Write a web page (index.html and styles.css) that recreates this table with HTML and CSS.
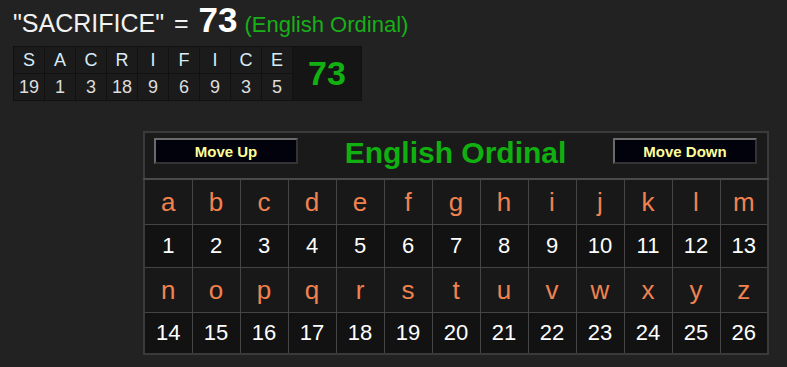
FILE: index.html
```html
<!DOCTYPE html>
<html lang="en">
<head>
    <meta charset="UTF-8">
    <title>Gematria - English Ordinal</title>
    <link rel="stylesheet" href="styles.css">
</head>
<body>

    <div class="result-title">
        "SACRIFICE" <span class="eq">=</span> <b class="total">73</b> <span class="cipher-name">(English Ordinal)</span>
    </div>

    <!-- letter breakdown -->
    <table class="breakdown">
        <tr class="bd-letters">
            <td>S</td><td>A</td><td>C</td><td>R</td><td>I</td><td>F</td><td>I</td><td>C</td><td>E</td>
            <td class="bd-sum" rowspan="2">73</td>
        </tr>
        <tr class="bd-values">
            <td>19</td><td>1</td><td>3</td><td>18</td><td>9</td><td>6</td><td>9</td><td>3</td><td>5</td>
        </tr>
    </table>

    <!-- cipher chart -->
    <table class="cipher-chart">
        <tr>
            <td class="chart-head" colspan="13">
                <div class="head-bar">
                    <button class="move-btn">Move Up</button>
                    <span class="chart-title">English Ordinal</span>
                    <button class="move-btn">Move Down</button>
                </div>
            </td>
        </tr>
        <tr class="chart-letters">
            <td>a</td><td>b</td><td>c</td><td>d</td><td>e</td><td>f</td><td>g</td><td>h</td><td>i</td><td>j</td><td>k</td><td>l</td><td>m</td>
        </tr>
        <tr class="chart-values">
            <td>1</td><td>2</td><td>3</td><td>4</td><td>5</td><td>6</td><td>7</td><td>8</td><td>9</td><td>10</td><td>11</td><td>12</td><td>13</td>
        </tr>
        <tr class="chart-letters">
            <td>n</td><td>o</td><td>p</td><td>q</td><td>r</td><td>s</td><td>t</td><td>u</td><td>v</td><td>w</td><td>x</td><td>y</td><td>z</td>
        </tr>
        <tr class="chart-values last">
            <td>14</td><td>15</td><td>16</td><td>17</td><td>18</td><td>19</td><td>20</td><td>21</td><td>22</td><td>23</td><td>24</td><td>25</td><td>26</td>
        </tr>
    </table>

</body>
</html>
```

FILE: styles.css
```css
/* base */
body {
    margin: 0;
    padding: 0 13px;
    background: #222222;
    color: #ffffff;
    font-family: "Liberation Sans", Arial, sans-serif;
}

/* heading line */
.result-title {
    font-size: 25px;
    line-height: 30px;
    padding-top: 5px;
    color: #f2f2f2;
    white-space: nowrap;
}

.result-title .eq {
    margin-left: 3px;
}

.result-title .total {
    margin-left: 3px;
    font-size: 35px;
    color: #ffffff;
}

.result-title .cipher-name {
    font-size: 22px;
    color: #18b018;
}

/* breakdown table */
.breakdown {
    margin-top: 6px;
    border-spacing: 1px;
    background: #111111;
}

.breakdown td {
    width: 30px;
    height: 26px;
    padding: 0;
    text-align: center;
    font-size: 18px;
    background: #1b1b1b;
}

.bd-letters td {
    color: #d8ecf8;
}

.bd-values td {
    color: #dddddd;
}

.breakdown td.bd-sum {
    width: 68px;
    background: #151515;
    color: #12b012;
    font-size: 34px;
    font-weight: bold;
}

/* cipher chart */
.cipher-chart {
    margin: 30px 0 0 130px;
    width: 626px;
    table-layout: fixed;
    border-collapse: collapse;
    border: 2px solid #3a3a3a;
    background: #171717;
}

.cipher-chart td {
    border: 1px solid #454545;
    padding: 0;
    text-align: center;
}

.chart-head {
    height: 45px;
    vertical-align: top;
    background: #1a1a1a;
    border-bottom: 2px solid #4a4a4a !important;
}

.head-bar {
    display: flex;
    align-items: flex-start;
    justify-content: space-between;
    padding: 0 10px 0 9px;
}

.move-btn {
    width: 144px;
    height: 26px;
    margin-top: 5px;
    padding: 0;
    background: #02020c;
    color: #ffff99;
    font-family: "Liberation Sans", Arial, sans-serif;
    font-size: 15px;
    font-weight: bold;
    border: 2px solid;
    border-color: #6a6a6a #333333 #333333 #6a6a6a;
}

.chart-title {
    margin-top: 3px;
    color: #10b010;
    font-size: 30px;
    font-weight: bold;
}

.chart-letters td {
    height: 44px;
    color: #f08250;
    font-size: 26px;
    background: #181818;
}

.chart-values td {
    height: 42px;
    color: #ffffff;
    font-size: 22px;
    background: #121212;
}

.chart-values.last td {
    height: 40px;
}
```
